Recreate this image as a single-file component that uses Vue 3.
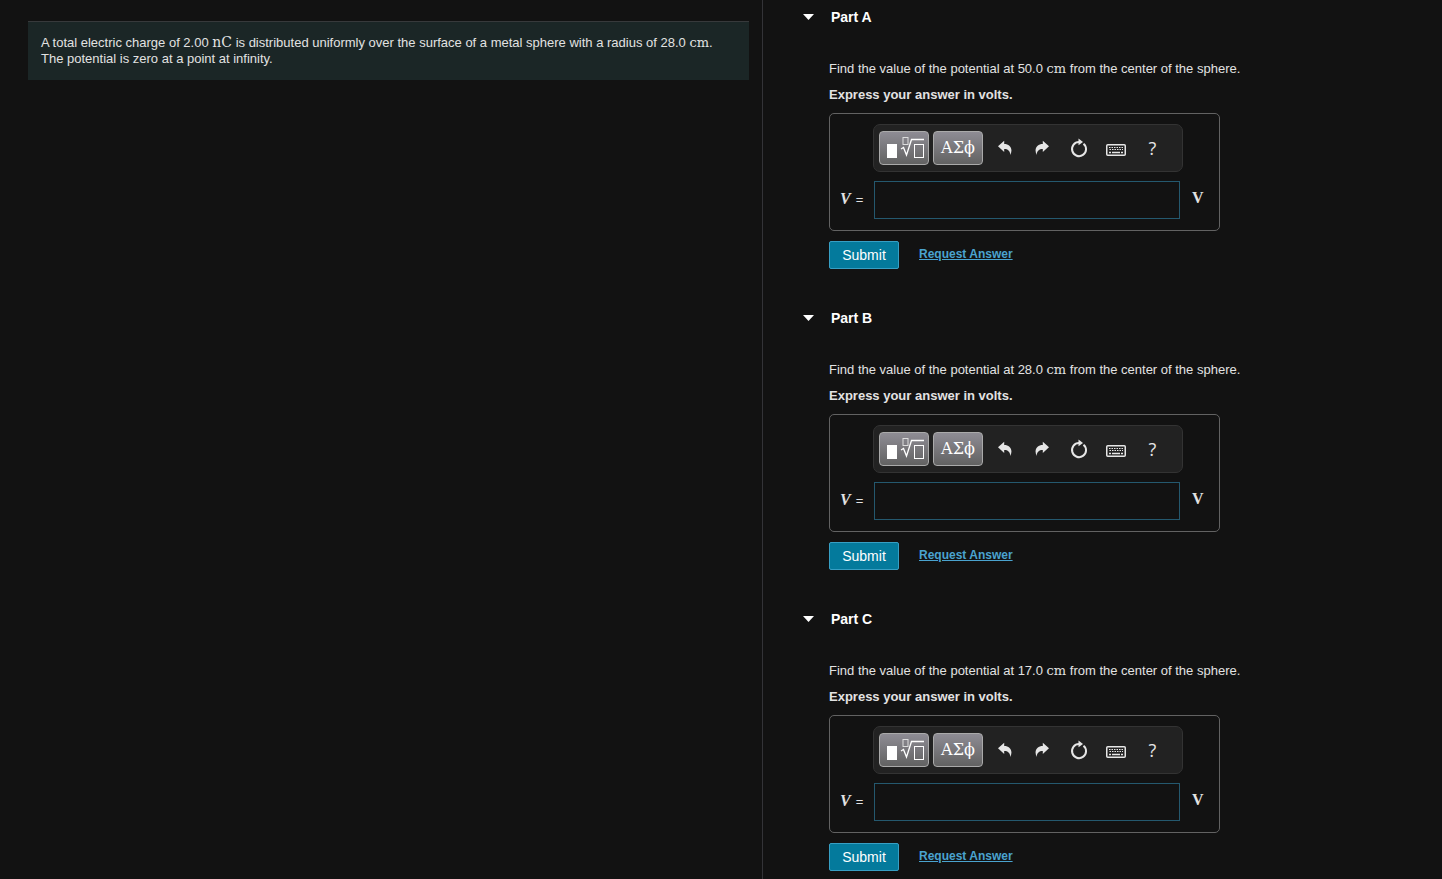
<script setup>
import { ref } from 'vue'

const parts = ref([
  { id: 'A', distance: '50.0', answer: '', open: true },
  { id: 'B', distance: '28.0', answer: '', open: true },
  { id: 'C', distance: '17.0', answer: '', open: true },
])
</script>

<template>
  <div class="page">
    <aside class="problem">
      <p class="statement">
        A total electric charge of 2.00 <span class="math charge">nC</span> is distributed uniformly over the surface of a metal sphere with a radius of 28.0 <span class="math">cm</span>. The potential is zero at a point at infinity.
      </p>
    </aside>
    <main class="parts">
      <section v-for="part in parts" :key="part.id" class="part">
        <h2 class="heading">
          <button type="button" class="toggle" :aria-expanded="part.open" @click="part.open = !part.open">
            <svg class="caret" width="11" height="6" viewBox="0 0 11 6" aria-hidden="true"><path d="M0 0H11L5.5 6Z" fill="#fff" /></svg>
            <span>Part {{ part.id }}</span>
          </button>
        </h2>
        <div v-if="part.open" class="body">
          <p class="question">Find the value of the potential at {{ part.distance }} <span class="math">cm</span> from the center of the sphere.</p>
          <p class="instruction">Express your answer in volts.</p>
          <div class="answer">
            <div class="toolbar" role="toolbar" aria-label="Equation tools">
              <button type="button" class="key" aria-label="Templates">
                <svg width="50" height="34" viewBox="0 0 50 34" fill="none" aria-hidden="true">
                  <rect x="8" y="13" width="10" height="14" fill="#fff" />
                  <rect x="24" y="6.5" width="5" height="7" stroke="#ddd" />
                  <path d="M22 18L24.500 16.500L27.500 24L32.500 8.500H45" stroke="#fff" stroke-width="1.3" />
                  <rect x="35.500" y="13.500" width="9" height="13" stroke="#fff" />
                </svg>
              </button>
              <button type="button" class="key greek">ΑΣϕ</button>
              <div class="tools">
                <button type="button" class="tool" aria-label="Undo">
                  <svg width="16" height="16" viewBox="0 0 16 16" aria-hidden="true"><path d="M1 6.200L7.200.800V4.100C12.500 4 16.500 8.500 13.300 15C13.200 10.500 10.500 8.800 7.200 8.900V12Z" fill="#e6e6e6" /></svg>
                </button>
                <button type="button" class="tool" aria-label="Redo">
                  <svg width="16" height="16" viewBox="0 0 16 16" aria-hidden="true"><path d="M15 6.200L8.800.800V4.100C3.500 4-.5 8.500 2.700 15C2.800 10.500 5.500 8.800 8.800 8.900V12Z" fill="#e6e6e6" /></svg>
                </button>
                <button type="button" class="tool" aria-label="Reset">
                  <svg width="18" height="20" viewBox="0 0 18 20" aria-hidden="true"><path d="M13.500 5.700A7 7 0 1 1 9 4.100" fill="none" stroke="#e6e6e6" stroke-width="2" /><path d="M8.500.500L13 4L8.500 7.300Z" fill="#e6e6e6" /></svg>
                </button>
                <button type="button" class="tool low" aria-label="Keyboard shortcuts">
                  <svg width="20" height="12" viewBox="0 0 20 12" fill="none" aria-hidden="true">
                    <rect x=".75" y=".75" width="18.500" height="10.500" rx="1" stroke="#e6e6e6" stroke-width="1.500" />
                    <path d="M3 3.500H17M3.500 5.500H17" stroke="#e6e6e6" stroke-dasharray="1.500 1" />
                    <path d="M3 8.500H5M6 8.500H14M15 8.500H17" stroke="#e6e6e6" stroke-width="1.500" />
                  </svg>
                </button>
                <button type="button" class="tool help" aria-label="Help">?</button>
              </div>
            </div>
            <label class="symbol" :for="'answer-' + part.id"><i>V</i><span>=</span></label>
            <input :id="'answer-' + part.id" v-model="part.answer" class="field" type="text" autocomplete="off" />
            <span class="unit">V</span>
          </div>
          <div class="actions">
            <button type="button" class="submit">Submit</button>
            <a href="#" class="request" @click.prevent>Request Answer</a>
          </div>
        </div>
      </section>
    </main>
  </div>
</template>

<style>
body {
  background: #121212;
}
</style>

<style scoped>
.page {
  display: grid;
  grid-template-columns: 763fr 679fr;
  height: 100vh;
  overflow: hidden;
  background: #121212;
  color: #e2e2e2;
  font: 13px/16px "Liberation Sans", Arial, sans-serif;
}
.page * {
  box-sizing: border-box;
}
p,
h2 {
  margin: 0;
}
button {
  padding: 0;
  border: 0;
  background: none;
  color: inherit;
  font: inherit;
  cursor: pointer;
}
.problem {
  padding: 21px 13px 0 28px;
  border-right: 1px solid #333337;
}
.statement {
  padding: 13px 12px 13px 13px;
  border-top: 1px solid #37393b;
  background: #1b2626;
}
.math {
  font-family: "DejaVu Serif", serif;
  line-height: 12px;
}
.charge {
  font-size: 14px;
}
.parts {
  min-width: 0;
  overflow: hidden;
}
.part {
  padding: 0 40px 32px;
}
.heading {
  font-size: 14px;
  line-height: 34px;
}
.toggle {
  display: flex;
  align-items: center;
  gap: 17px;
  color: #fff;
  font-weight: bold;
}
.body {
  padding: 27px 0 0 26px;
}
.instruction {
  margin-top: 10px;
  font-weight: bold;
}
.answer {
  display: grid;
  grid-template-columns: 33px 310px 1fr;
  row-gap: 9px;
  align-items: center;
  width: 391px;
  margin-top: 10px;
  padding: 10px 10px 11px;
  border: 1px solid #626262;
  border-radius: 5px;
}
.toolbar {
  display: flex;
  grid-column: 2;
  align-items: center;
  gap: 4px;
  height: 48px;
  padding: 0 5px;
  border: 1px solid #333;
  border-radius: 7px;
  background: #222;
}
.key {
  width: 50px;
  height: 34px;
  flex: none;
  border: 1px solid #aaa;
  border-radius: 4px;
  background: linear-gradient(#8e8c94, #626262);
  color: #fff;
}
.key svg {
  display: block;
  margin: -1px;
}
.greek {
  font: 16px/30px "DejaVu Serif", serif;
}
.tools {
  display: flex;
  margin-left: -1px;
}
.tool {
  display: flex;
  align-items: center;
  justify-content: center;
  width: 37px;
  height: 34px;
  color: #e6e6e6;
}
.low {
  padding-top: 4px;
}
.help {
  font: 18px/32px "Open Sans", sans-serif;
}
.symbol {
  display: flex;
  grid-column: 1;
  align-items: baseline;
  gap: 5px;
  padding-bottom: 3px;
}
.symbol i,
.unit {
  font: bold 16px/20px "Liberation Serif", serif;
}
.symbol i {
  font-style: italic;
}
.field {
  width: 306px;
  height: 38px;
  margin-left: 1px;
  padding: 0 8px;
  border: 1px solid #24586e;
  border-radius: 0;
  outline: 0;
  background: #121212;
  color: #fff;
  font: 16px "Liberation Serif", serif;
}
.unit {
  padding: 0 0 4px 9px;
}
.actions {
  display: flex;
  align-items: center;
  gap: 20px;
  margin-top: 10px;
}
.submit {
  width: 70px;
  height: 28px;
  border: 1px solid #379fc4;
  border-radius: 2px;
  background: #047a9c;
  color: #fff;
  font-size: 14px;
}
.request {
  padding-bottom: 2px;
  color: #4aa3cf;
  font-size: 12px;
  font-weight: bold;
}
</style>
